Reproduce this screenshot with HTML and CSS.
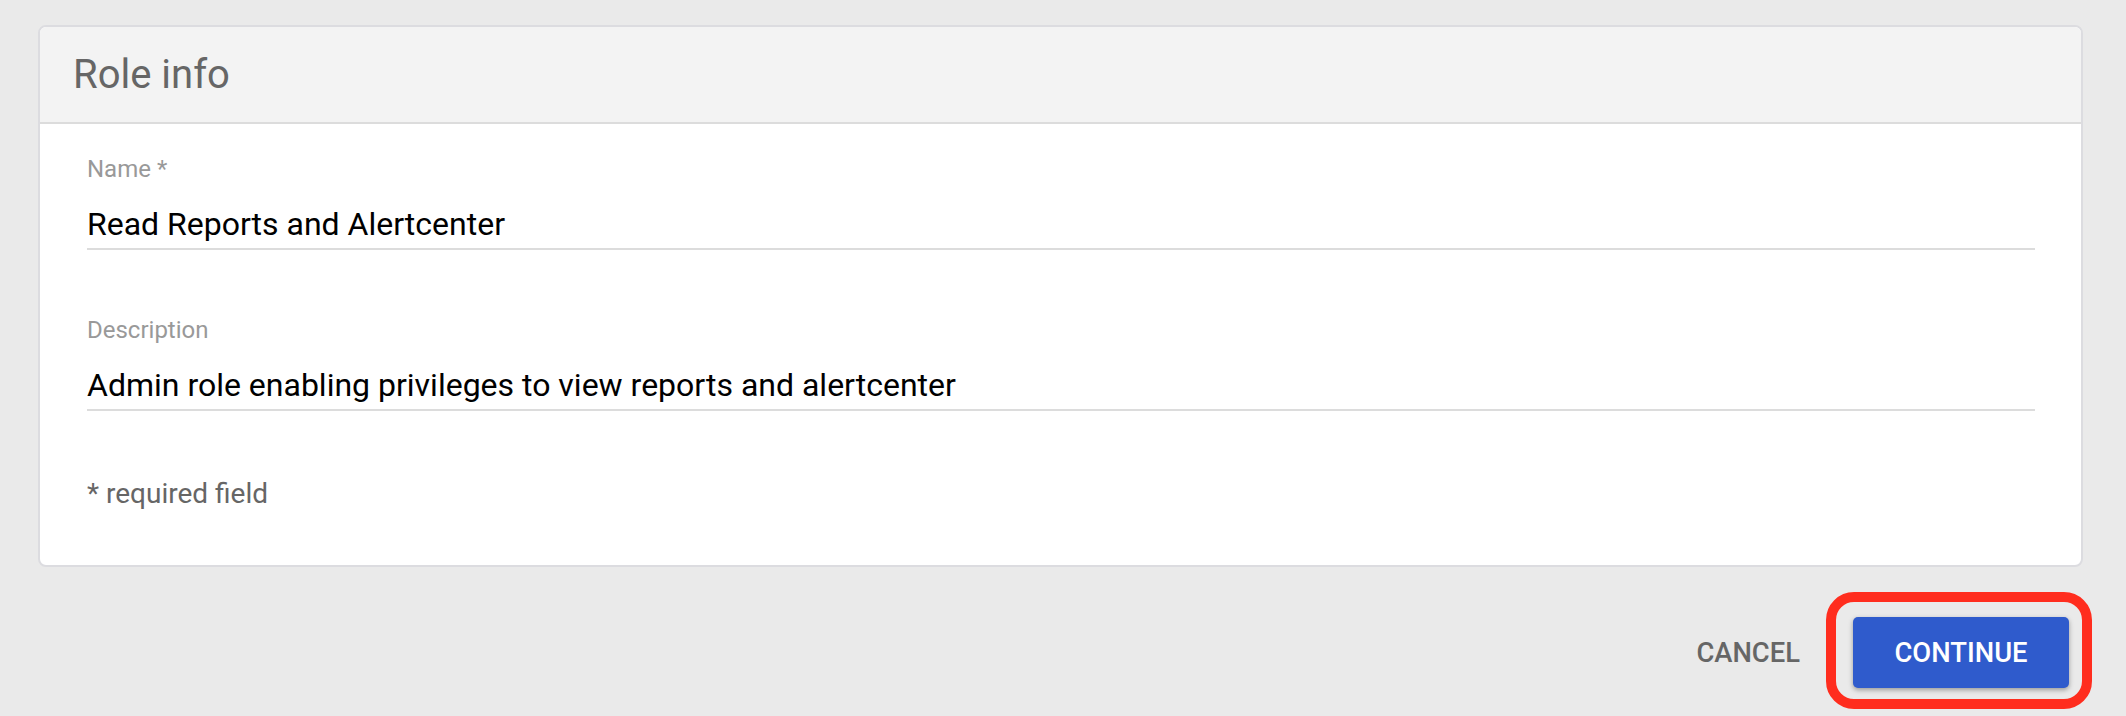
FILE: index.html
```html
<!DOCTYPE html>
<html lang="en">
<head>
<meta charset="utf-8">
<title>Role info</title>
<link rel="stylesheet" href="styles.css">
</head>
<body>
<div class="page">
  <section class="card">
    <header class="card-header">Role info</header>
    <div class="card-body">
      <div class="field">
        <label class="field-label">Name *</label>
        <div class="field-value">Read Reports and Alertcenter</div>
      </div>
      <div class="field field-next">
        <label class="field-label">Description</label>
        <div class="field-value">Admin role enabling privileges to view reports and alertcenter</div>
      </div>
      <p class="required-note">* required field</p>
    </div>
  </section>
  <div class="actions">
    <button class="btn-text" type="button">CANCEL</button>
    <span class="highlight">
      <button class="btn-primary" type="button">CONTINUE</button>
    </span>
  </div>
</div>
</body>
</html>
```

FILE: styles.css
```css
* { box-sizing: border-box; }
html, body {
  margin: 0;
  padding: 0;
  background: #eaeaea;
  font-family: Roboto, "Liberation Sans", Arial, sans-serif;
}
.page {
  width: 2126px;
  height: 716px;
  padding: 25px 43px 0 38px;
  overflow: hidden;
}
.card {
  background: #ffffff;
  border: 2px solid #dcdce0;
  border-radius: 8px;
  overflow: hidden;
}
.card-header {
  background: #f3f3f3;
  border-bottom: 2px solid #dcdcdc;
  height: 97px;
  line-height: 95px;
  padding-left: 33px;
  font-size: 40px;
  color: #666666;
}
.card-body {
  padding: 31px 46px 55px 47px;
}
.field {
  border-bottom: 2px solid #dcdcdc;
  padding-bottom: 6px;
}
.field-next {
  margin-top: 66px;
}
.field-label {
  display: block;
  font-size: 24px;
  line-height: 28px;
  color: #999999;
}
.field-value {
  margin-top: 23px;
  font-size: 32px;
  line-height: 36px;
  color: #000000;
}
.required-note {
  margin: 67px 0 0 0;
  font-size: 28px;
  line-height: 32px;
  color: #666666;
}
.actions {
  display: flex;
  justify-content: flex-end;
  align-items: center;
  margin-top: 25px;
  margin-right: -9px;
}
.btn-text {
  background: none;
  border: none;
  padding: 0;
  margin-right: 26px;
  font-family: inherit;
  font-weight: 500;
  font-size: 27.4px;
  color: #666666;
  margin-top: 4px;
}
.highlight {
  display: inline-flex;
  border: 10px solid #ff2d1e;
  border-radius: 28px;
  padding: 15px 13px 11px 17px;
}
.btn-primary {
  width: 216px;
  height: 71px;
  background: #2f5bcc;
  border: none;
  border-radius: 5px;
  color: #ffffff;
  font-family: inherit;
  font-weight: 500;
  font-size: 27.4px;
  box-shadow: 0 2px 5px rgba(0, 0, 0, 0.35);
}
```
